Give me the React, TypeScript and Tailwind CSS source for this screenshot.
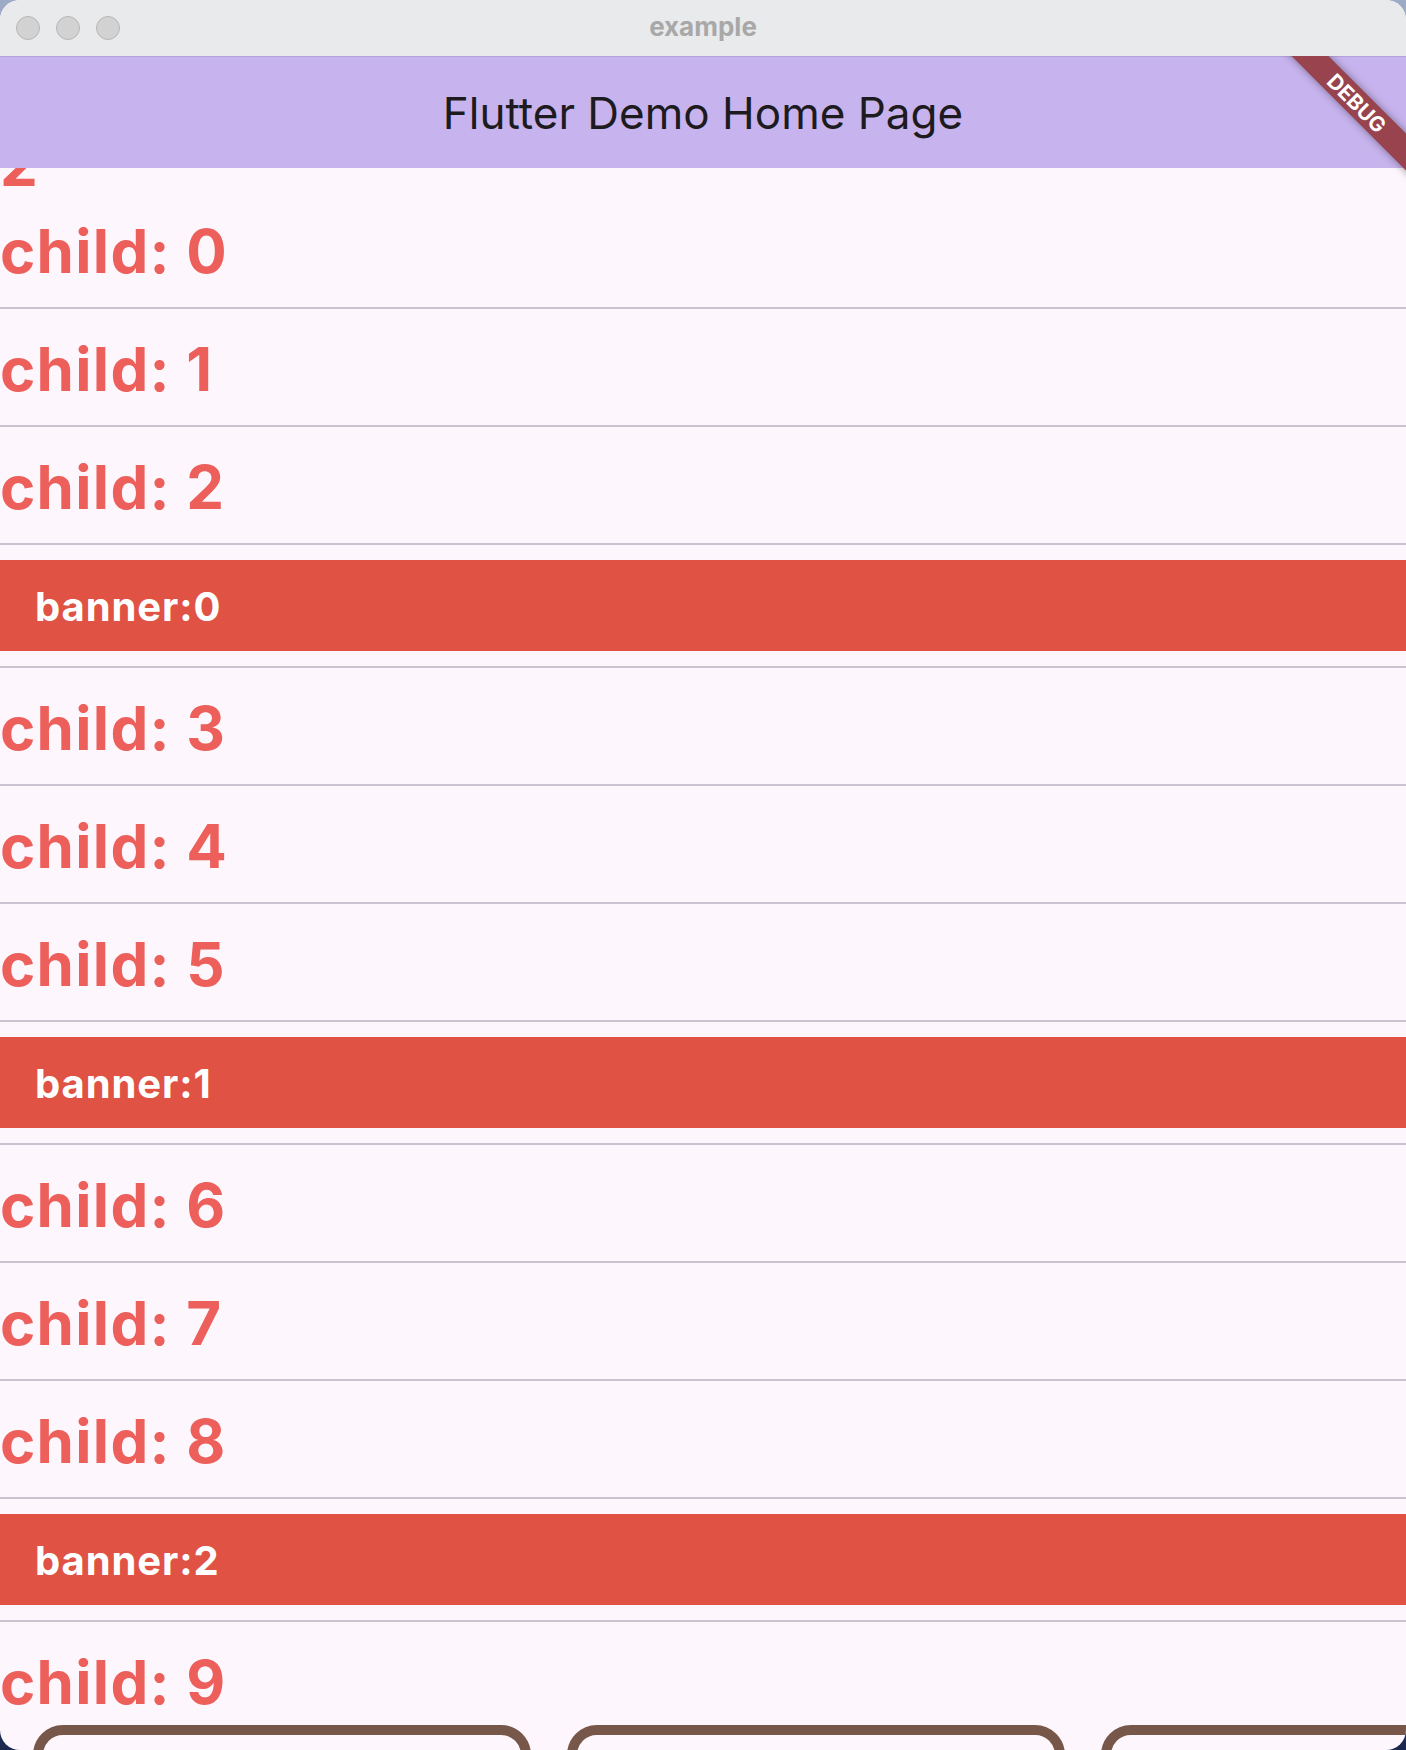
import React from "react";

const FONT = { fontFamily: "Inter, 'Noto Sans', sans-serif" };

function ChildRow({ label }: { label: string }) {
  return (
    <div className="h-[118px] flex-none border-b-2 border-[#cac4d0] pt-[30px]">
      <div className="text-[60px] leading-[60px] font-bold tracking-[1.3px] text-[#ed5f5a] whitespace-nowrap">{label}</div>
    </div>
  );
}

function BannerRow({ label }: { label: string }) {
  return (
    <div className="h-[123px] flex-none border-b-2 border-[#cac4d0] py-[15px]">
      <div className="h-[91px] bg-[#e05244] flex items-center pl-[35px] pt-[3px]">
        <span className="text-white font-bold text-[40px] leading-none tracking-[0.9px]">{label}</span>
      </div>
    </div>
  );
}

export default function App() {
  return (
    <div className="w-[1406px] h-[1750px] bg-linear-to-b from-[#9eabc6] to-[#1b2850]" style={FONT}>
      <div className="h-full rounded-[20px] overflow-hidden flex flex-col bg-[#fdf7fd]">
        {/* macOS title bar */}
        <div className="h-[56px] flex-none bg-[#e9eaec] grid grid-cols-[1fr_auto_1fr] items-center">
          <div className="flex gap-[16px] pl-[16px]">
            <div className="w-[24px] h-[24px] rounded-full bg-[#d2d2d2] border border-[#b6b6b6]" />
            <div className="w-[24px] h-[24px] rounded-full bg-[#d2d2d2] border border-[#b6b6b6]" />
            <div className="w-[24px] h-[24px] rounded-full bg-[#d2d2d2] border border-[#b6b6b6]" />
          </div>
          <div className="text-[26px] leading-none font-bold text-[#a8a8a8] pb-[2px]">example</div>
          <div />
        </div>

        {/* Flutter view */}
        <div className="relative flex-1 flex flex-col overflow-hidden">
          <div className="h-[112px] flex-none bg-[#c7b4ee] border-t border-[#b3a3dd] flex items-center justify-center">
            <span className="text-[44px] leading-none text-[#1d1b20]">Flutter Demo Home Page</span>
          </div>

          <div className="h-[1547px] flex-none overflow-hidden flex flex-col">
            <div className="mt-[-34px] h-[57px] flex-none">
              <div className="text-[60px] leading-[60px] font-bold text-[#ed5f5a]">2</div>
            </div>
            <ChildRow label="child: 0" />
            <ChildRow label="child: 1" />
            <ChildRow label="child: 2" />
            <BannerRow label="banner:0" />
            <ChildRow label="child: 3" />
            <ChildRow label="child: 4" />
            <ChildRow label="child: 5" />
            <BannerRow label="banner:1" />
            <ChildRow label="child: 6" />
            <ChildRow label="child: 7" />
            <ChildRow label="child: 8" />
            <BannerRow label="banner:2" />
            <ChildRow label="child: 9" />
          </div>

          <div className="flex-none flex gap-[36px] pl-[33px] pt-[10px]">
            <div className="w-[498px] h-[140px] shrink-0 border-[10px] border-[#77574a] rounded-[30px]" />
            <div className="w-[498px] h-[140px] shrink-0 border-[10px] border-[#77574a] rounded-[30px]" />
            <div className="w-[498px] h-[140px] shrink-0 border-[10px] border-[#77574a] rounded-[30px]" />
          </div>

          {/* DEBUG banner */}
          <div className="absolute left-[1227px] top-[34px] w-[260px] h-[26px] rotate-45 bg-[#98434d] flex items-center justify-center shadow-[0_0_8px_rgba(0,0,0,0.4)]">
            <span className="text-white font-bold text-[21px] leading-none">DEBUG</span>
          </div>
        </div>
      </div>
    </div>
  );
}
